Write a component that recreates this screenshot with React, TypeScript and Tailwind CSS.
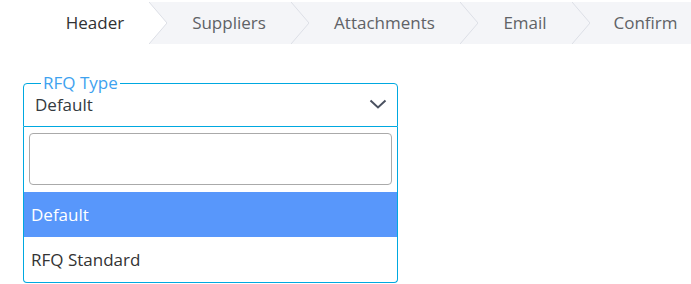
import { useState } from "react";

const FONT = { fontFamily: '"Open Sans", "Noto Sans", sans-serif' };

const STEPS = [
  { label: "Header", width: "w-[149px] pl-[41px]", active: true },
  { label: "Suppliers", width: "w-[124px]" },
  { label: "Attachments", width: "w-[151px]" },
  { label: "Email", width: "w-[94px]" },
  { label: "Confirm", width: "w-[111px]" },
];

function StepArrow({ white }: { white?: boolean }) {
  return (
    <svg width="18" height="42" viewBox="0 0 18 42" className="shrink-0 block">
      {white && <polygon points="0,0 18,21 0,42" fill="#ffffff" />}
      <polyline points="0,0 18,21 0,42" fill="none" stroke="#dcdfe6" strokeWidth="1" />
    </svg>
  );
}

function Steps() {
  return (
    <div className="mt-[2px] flex h-[42px] overflow-hidden bg-[#f4f5f8]">
      {STEPS.map((s, i) => (
        <div key={s.label} className="flex shrink-0">
          <div
            className={`flex shrink-0 items-center justify-center text-[17px] ${s.width} ${
              s.active ? "bg-white text-[#303133]" : "text-[#606266]"
            }`}
          >
            {s.label}
          </div>
          {i < STEPS.length - 1 && <StepArrow white={s.active} />}
        </div>
      ))}
    </div>
  );
}

const OPTIONS = ["Default", "RFQ Standard"];

export default function App() {
  const [selected] = useState("Default");
  const [query, setQuery] = useState("");

  return (
    <div className="h-[284px] w-[691px] overflow-hidden bg-white" style={FONT}>
      <Steps />
      <div className="ml-[23px] mt-[29px] w-[375px]">
        <fieldset className="rounded-t-[4px] border border-[#00a8e0] px-[11px]">
          <legend className="ml-[6px] px-[2px] text-[17px] leading-[20px] text-[#3ea2ef]">RFQ Type</legend>
          <div className="flex items-center justify-between pb-[9px] text-[17px] leading-[24px] text-[#343a40]">
            <span>{selected}</span>
            <svg width="18" height="10" viewBox="0 0 18 10" className="-mt-[3px] mr-[-1px]">
              <polyline points="1.5,1.5 9,8.5 16.5,1.5" fill="none" stroke="#4a5160" strokeWidth="2" />
            </svg>
          </div>
        </fieldset>
        <div className="rounded-b-[4px] border-x border-b border-[#00a8e0] pt-[6px]">
          <div className="px-[5px]">
            <input
              value={query}
              onChange={(e) => setQuery(e.target.value)}
              className="block h-[52px] w-full rounded-[4px] border border-[#aaaaaa] px-2 text-[17px] outline-none"
            />
          </div>
          <ul className="mt-[7px] text-[17px]">
            {OPTIONS.map((o) => (
              <li
                key={o}
                className={`flex h-[45px] items-center px-[7px] ${
                  o === selected ? "bg-[#5897fb] text-white" : "text-[#333333]"
                }`}
              >
                {o}
              </li>
            ))}
          </ul>
        </div>
      </div>
    </div>
  );
}
